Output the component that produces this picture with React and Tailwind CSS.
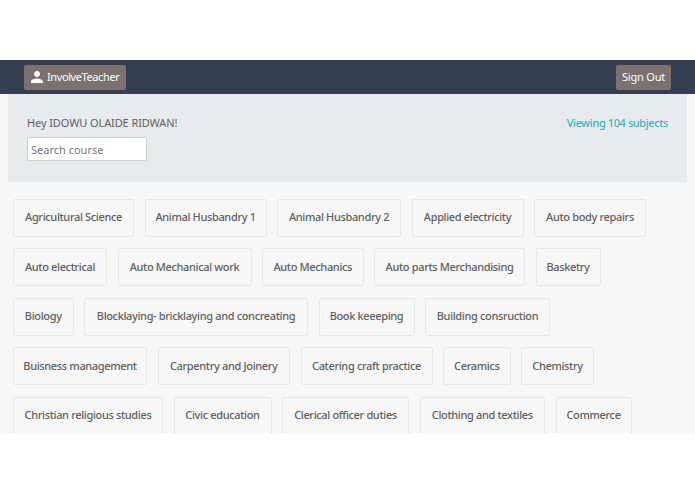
import { MdPerson } from 'react-icons/md';

const subjects = [
  { name: 'Agricultural Science', width: 'w-[121px]' },
  { name: 'Animal Husbandry 1', width: 'w-[122px]' },
  { name: 'Animal Husbandry 2', width: 'w-[124px]' },
  { name: 'Applied electricity', width: 'w-[112px]' },
  { name: 'Auto body repairs', width: 'w-[112px]' },
  { name: 'Auto electrical', width: 'w-[94px]' },
  { name: 'Auto Mechanical work', width: 'w-[134px]' },
  { name: 'Auto Mechanics', width: 'w-[101.5px]' },
  { name: 'Auto parts Merchandising', width: 'w-[151px]' },
  { name: 'Basketry', width: 'w-[65px]' },
  { name: 'Biology', width: 'w-[60.5px]' },
  { name: 'Blocklaying- bricklaying and concreating', width: 'w-[224px]' },
  { name: 'Book keeeping', width: 'w-[96px]' },
  { name: 'Building consruction', width: 'w-[125px]' },
  { name: 'Buisness management', width: 'w-[134px]' },
  { name: 'Carpentry and Joinery', width: 'w-[132.5px]' },
  { name: 'Catering craft practice', width: 'w-[132px]' },
  { name: 'Ceramics', width: 'w-[67.5px]' },
  { name: 'Chemistry', width: 'w-[73px]' },
  { name: 'Christian religious studies', width: 'w-[150px]' },
  { name: 'Civic education', width: 'w-[98px]' },
  { name: 'Clerical officer duties', width: 'w-[127px]' },
  { name: 'Clothing and textiles', width: 'w-[125.5px]' },
  { name: 'Commerce', width: 'w-[76px]' },
];

const App = () => {
  return (
    <div className="w-[695px] h-[494px] bg-white pt-[60px] overflow-hidden font-['Noto_Sans','Open_Sans',sans-serif]">
      {/* navbar */}
      <header className="h-[34px] bg-[#353f51] flex items-center justify-between pl-[24px] pr-[24px]">
        <button className="h-[25px] w-[102px] bg-[#7a7170] rounded-[2px] flex items-center pl-[4px] gap-[1px] text-white text-[11px] tracking-[-0.4px]">
          <MdPerson className="w-[18px] h-[18px] shrink-0" />
          <span>InvolveTeacher</span>
        </button>
        <button className="h-[25px] w-[55px] bg-[#7a7170] rounded-[2px] text-white text-[11px] tracking-[-0.2px]">
          Sign Out
        </button>
      </header>

      <main className="h-[340px] bg-[#f7f7f7] overflow-hidden">
        {/* welcome panel */}
        <section className="ml-[8px] mr-[8px] h-[88px] bg-[#e8ebee] flex justify-between pl-[19px] pr-[19px] pt-[20px]">
          <div>
            <p className="text-[11px] leading-[17px] tracking-[-0.1px] text-[#5f5f5f]">Hey IDOWU OLAIDE RIDWAN!</p>
            <input
              placeholder="Search course"
              className="mt-[6px] w-[120px] h-[24px] bg-white border border-[#cfcfcf] rounded-[1px] pl-[3px] text-[11px] text-[#5f5f5f] placeholder:text-[#777777] outline-none"
            />
          </div>
          <p className="text-[11px] leading-[17px] font-medium tracking-[-0.4px] text-[#3fb0c0]">Viewing 104 subjects</p>
        </section>

        {/* subject tiles */}
        <div className="flex flex-wrap gap-x-[10.5px] gap-y-[11.5px] pl-[13px] pr-[30px] pt-[16.75px]">
          {subjects.map(subject => (
            <div
              key={subject.name}
              className={`${subject.width} h-[38px] shrink-0 border border-[#e6e6e6] rounded-[2px] flex items-center justify-center pb-[1px] whitespace-nowrap text-[11px] font-medium tracking-[-0.35px] text-[#5f5f5f]`}
            >
              {subject.name}
            </div>
          ))}
        </div>
      </main>
    </div>
  );
};

export default App;
